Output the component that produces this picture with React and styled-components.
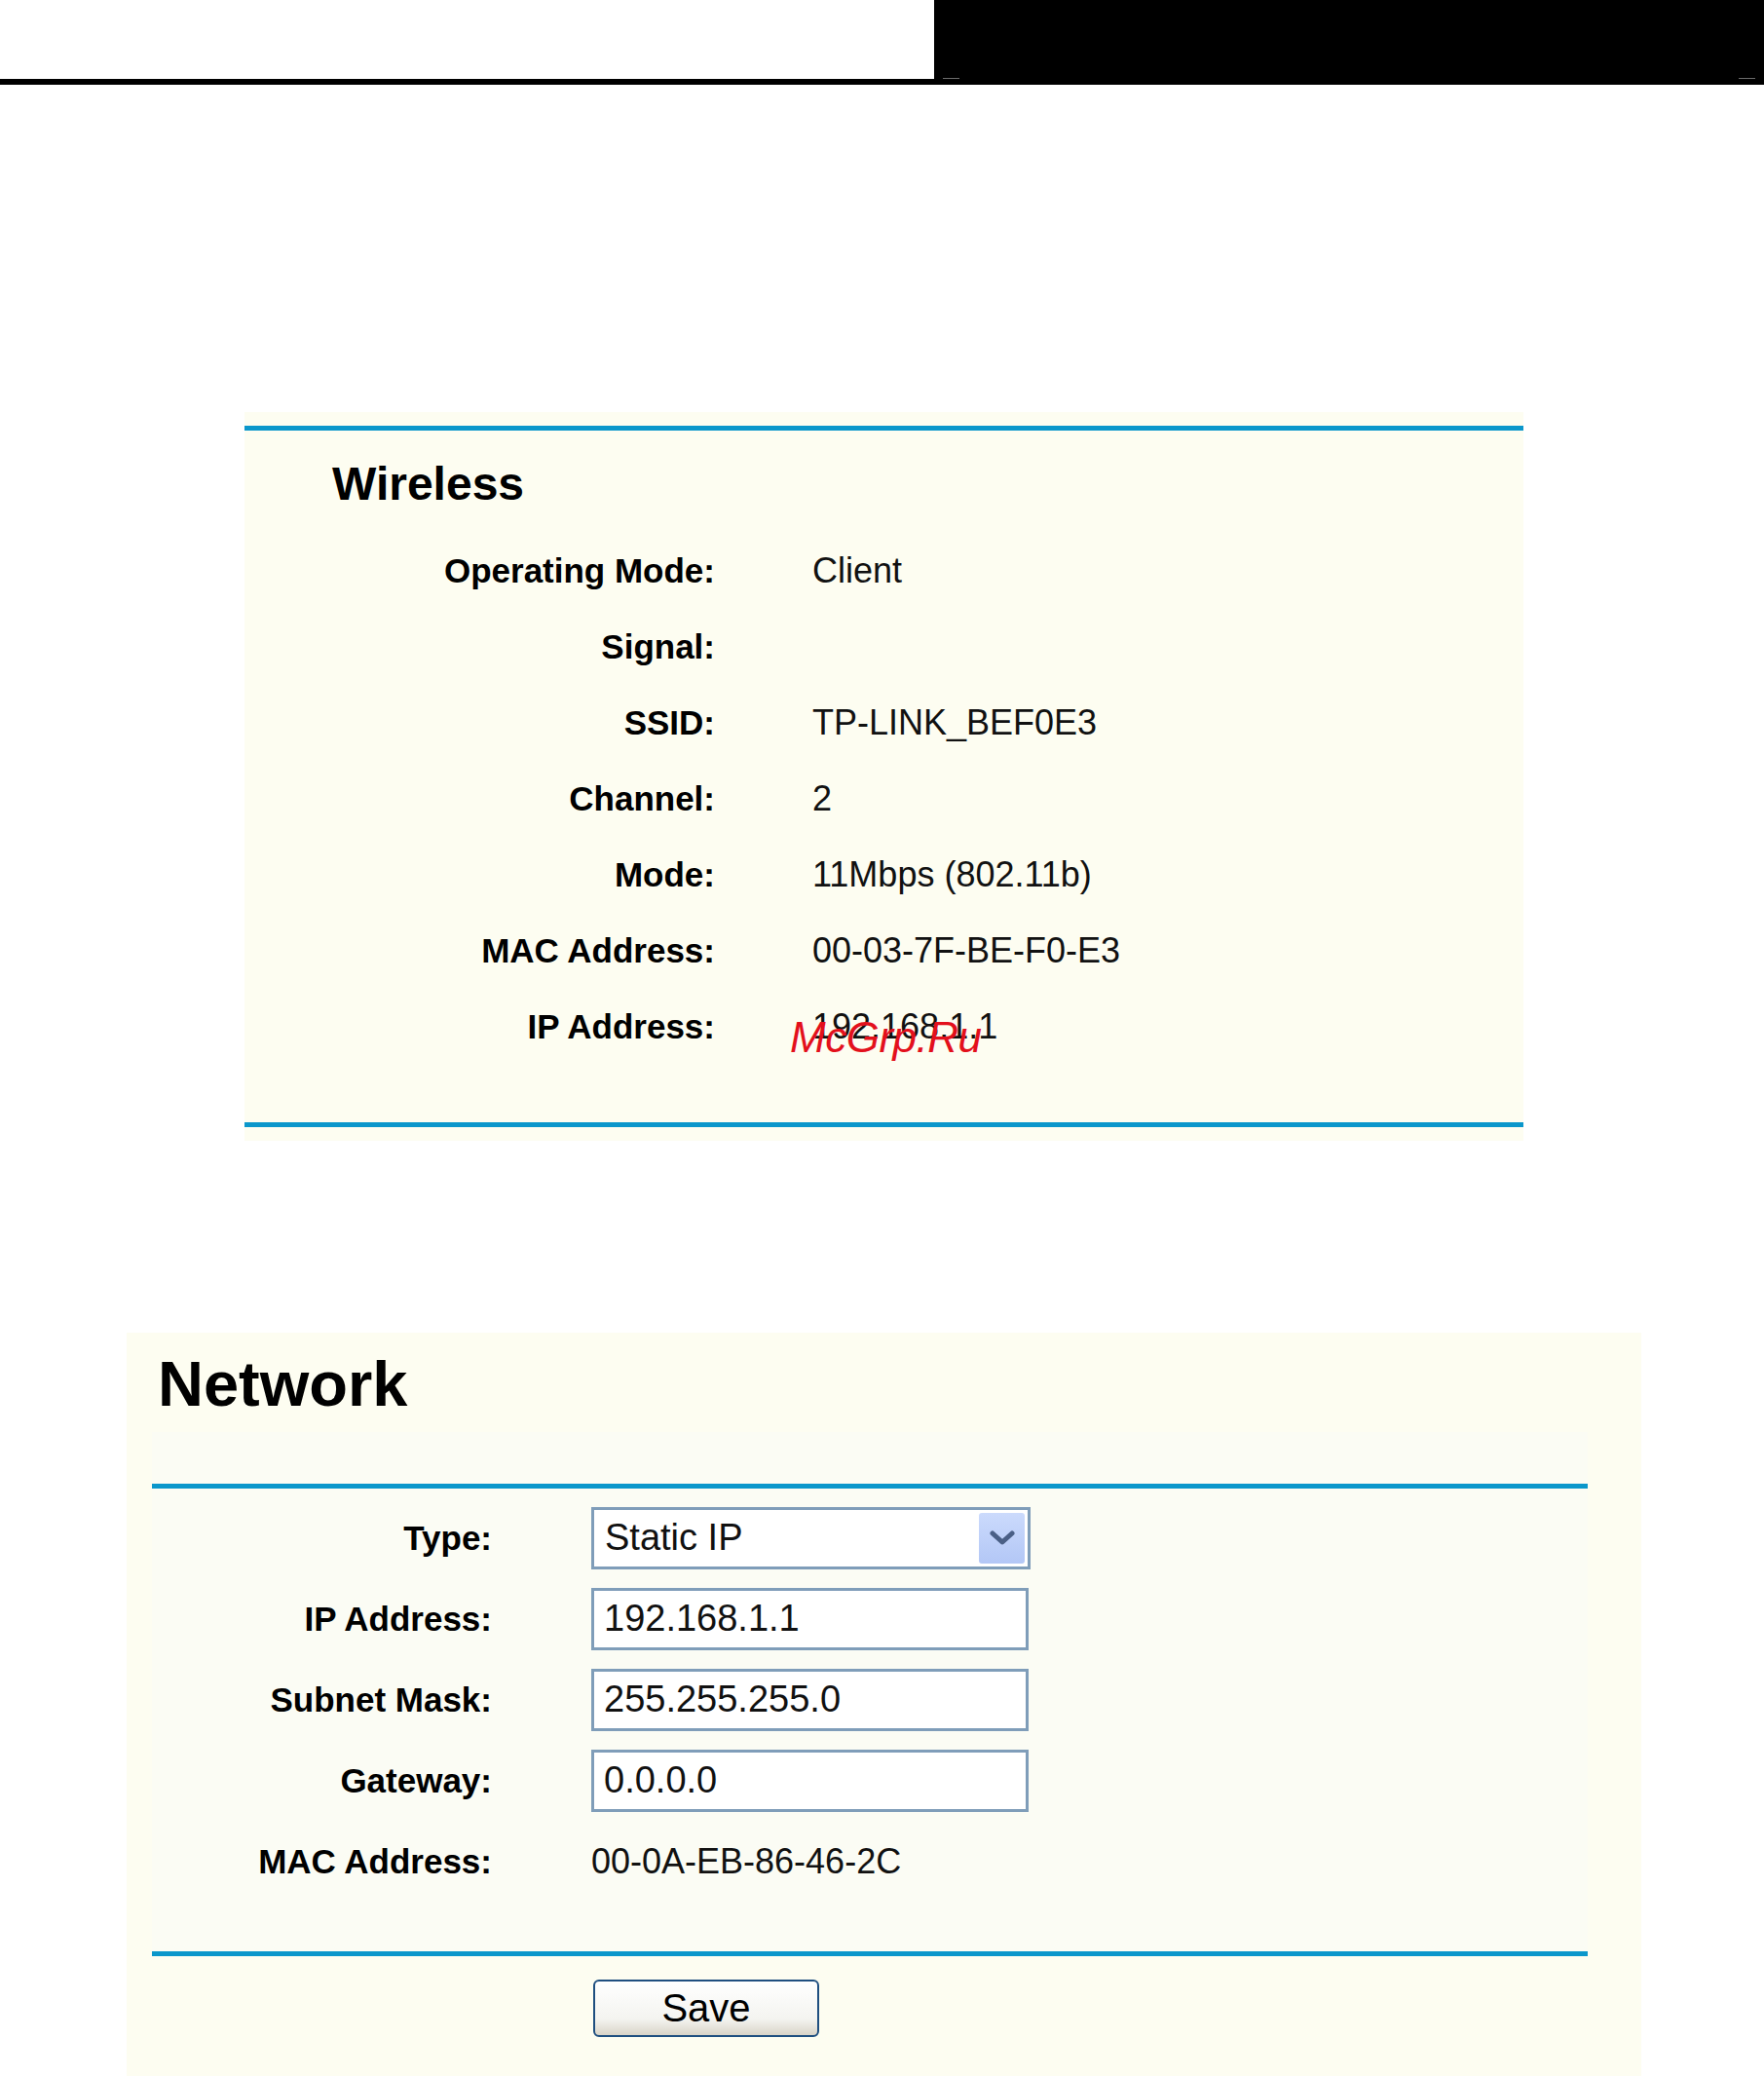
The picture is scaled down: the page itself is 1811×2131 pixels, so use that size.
import React from 'react';
import styled, { createGlobalStyle } from 'styled-components';

const BLUE = '#0b97cb';
const CREAM = '#fdfdf1';
const CREAM_INNER = '#fbfcf4';

const GlobalStyle = createGlobalStyle`
  html, body {
    margin: 0;
    padding: 0;
    background: #fff;
  }
  body {
    font-family: "Liberation Sans", Arial, sans-serif;
    color: #000;
  }
`;

const wirelessRows = [
    ['Operating Mode:', 'Client'],
    ['Signal:', ''],
    ['SSID:', 'TP-LINK_BEF0E3'],
    ['Channel:', '2'],
    ['Mode:', '11Mbps (802.11b)'],
    ['MAC Address:', '00-03-7F-BE-F0-E3'],
    ['IP Address:', '192.168.1.1'],
];

const networkFields = [
    ['IP Address:', '192.168.1.1'],
    ['Subnet Mask:', '255.255.255.0'],
    ['Gateway:', '0.0.0.0'],
];

const App = () => {
    return (
        <Page>
            <GlobalStyle />
            <TopBar>
                <Blank />
                <Banner>
                    <Tick $side="left" />
                    <Tick $side="right" />
                </Banner>
            </TopBar>
            <Rule />

            <WirelessSection>
                <WirelessBody>
                    <SectionTitle>Wireless</SectionTitle>
                    <StatusList>
                        {wirelessRows.map(([label, value]) => (
                            <StatusRow key={label}>
                                <Label>{label}</Label>
                                <Value>{value}</Value>
                            </StatusRow>
                        ))}
                    </StatusList>
                </WirelessBody>
                <Stamp>McGrp.Ru</Stamp>
            </WirelessSection>

            <NetworkSection>
                <PageTitle>Network</PageTitle>
                <FormTable>
                    <FormBody>
                        <FormRow>
                            <Label>Type:</Label>
                            <SelectBox>
                                <span>Static IP</span>
                                <ArrowButton>
                                    <svg width="26" height="18" viewBox="0 0 26 18">
                                        <path d="M3 4 L13 13 L23 4" fill="none" stroke="#4a5f86" strokeWidth="5" strokeLinecap="round" strokeLinejoin="round" />
                                    </svg>
                                </ArrowButton>
                            </SelectBox>
                        </FormRow>
                        {networkFields.map(([label, value]) => (
                            <FormRow key={label}>
                                <Label>{label}</Label>
                                <Field defaultValue={value} />
                            </FormRow>
                        ))}
                        <FormRow>
                            <Label>MAC Address:</Label>
                            <Value>00-0A-EB-86-46-2C</Value>
                        </FormRow>
                    </FormBody>
                </FormTable>
                <ButtonRow>
                    <SaveButton type="button">Save</SaveButton>
                </ButtonRow>
            </NetworkSection>
        </Page>
    );
};

export default App;

const Page = styled.div`
    width: 1811px;
    min-height: 2131px;
    overflow: hidden;
`;

const TopBar = styled.div`
    display: flex;
    height: 81px;
`;

const Blank = styled.div`
    width: 959px;
    background: #fff;
`;

const Banner = styled.div`
    flex: 1;
    background: #000;
    position: relative;
`;

const Tick = styled.div`
    position: absolute;
    bottom: 0;
    ${({ $side }) => ($side === 'left' ? 'left: 9px;' : 'right: 9px;')}
    width: 17px;
    height: 1px;
    background: #6a6a6a;
`;

const Rule = styled.div`
    height: 6px;
    background: #000;
`;

const WirelessSection = styled.section`
    position: relative;
    margin: 336px 0 0 251px;
    width: 1313px;
    padding: 14px 0;
    background: ${CREAM};
`;

const WirelessBody = styled.div`
    border-top: 5px solid ${BLUE};
    border-bottom: 5px solid ${BLUE};
    padding: 25px 0 59px;
`;

const SectionTitle = styled.h2`
    margin: 0 0 20px 90px;
    height: 60px;
    line-height: 60px;
    font-size: 48px;
    font-weight: bold;
`;

const StatusList = styled.div`
    display: flex;
    flex-direction: column;
`;

const StatusRow = styled.div`
    display: grid;
    grid-template-columns: 483px 1fr;
    column-gap: 100px;
    align-items: center;
    height: 78px;
`;

const Label = styled.div`
    text-align: right;
    font-size: 35px;
    font-weight: bold;
    white-space: nowrap;
`;

const Value = styled.div`
    font-size: 36px;
    color: #111;
    white-space: nowrap;
`;

const Stamp = styled.div`
    position: absolute;
    left: 560px;
    top: 615px;
    font-size: 44px;
    line-height: 54px;
    font-style: italic;
    letter-spacing: -0.5px;
    color: #e3101c;
`;

const NetworkSection = styled.section`
    margin: 197px 0 0 130px;
    width: 1555px;
    min-height: 750px;
    padding-top: 13px;
    background: ${CREAM};
`;

const PageTitle = styled.h1`
    margin: 0 0 9px 32px;
    height: 80px;
    line-height: 80px;
    font-size: 65px;
    font-weight: bold;
`;

const FormTable = styled.div`
    margin-left: 26px;
    width: 1474px;
    padding-top: 53px;
    background: ${CREAM_INNER};
`;

const FormBody = styled.div`
    border-top: 5px solid ${BLUE};
    border-bottom: 5px solid ${BLUE};
    padding: 9px 0 51px;
`;

const FormRow = styled.div`
    display: grid;
    grid-template-columns: 349px 1fr;
    column-gap: 102px;
    align-items: center;
    height: 83px;
`;

const Field = styled.input`
    box-sizing: border-box;
    width: 449px;
    height: 64px;
    padding: 0 10px;
    border: 3px solid #7f9db9;
    background: #fff;
    font-family: "Liberation Sans", Arial, sans-serif;
    font-size: 38px;
    color: #111;
    outline: none;
`;

const SelectBox = styled.div`
    box-sizing: border-box;
    width: 451px;
    height: 64px;
    display: flex;
    align-items: center;
    justify-content: space-between;
    padding: 3px 3px 3px 11px;
    border: 3px solid #7f9db9;
    background: #fff;
    font-size: 38px;
    color: #111;
`;

const ArrowButton = styled.div`
    width: 47px;
    height: 100%;
    display: flex;
    align-items: center;
    justify-content: center;
    border-radius: 3px;
    background: linear-gradient(#cbdafc, #b3c7f6);
`;

const ButtonRow = styled.div`
    padding: 24px 0 0 479px;
`;

const SaveButton = styled.button`
    width: 232px;
    height: 59px;
    border: 2px solid #1f4f80;
    border-radius: 6px;
    background: linear-gradient(#ffffff, #f4f4f0 70%, #d9d4c8);
    font-family: "Liberation Sans", Arial, sans-serif;
    font-size: 40px;
    color: #000;
    padding: 0;
`;
